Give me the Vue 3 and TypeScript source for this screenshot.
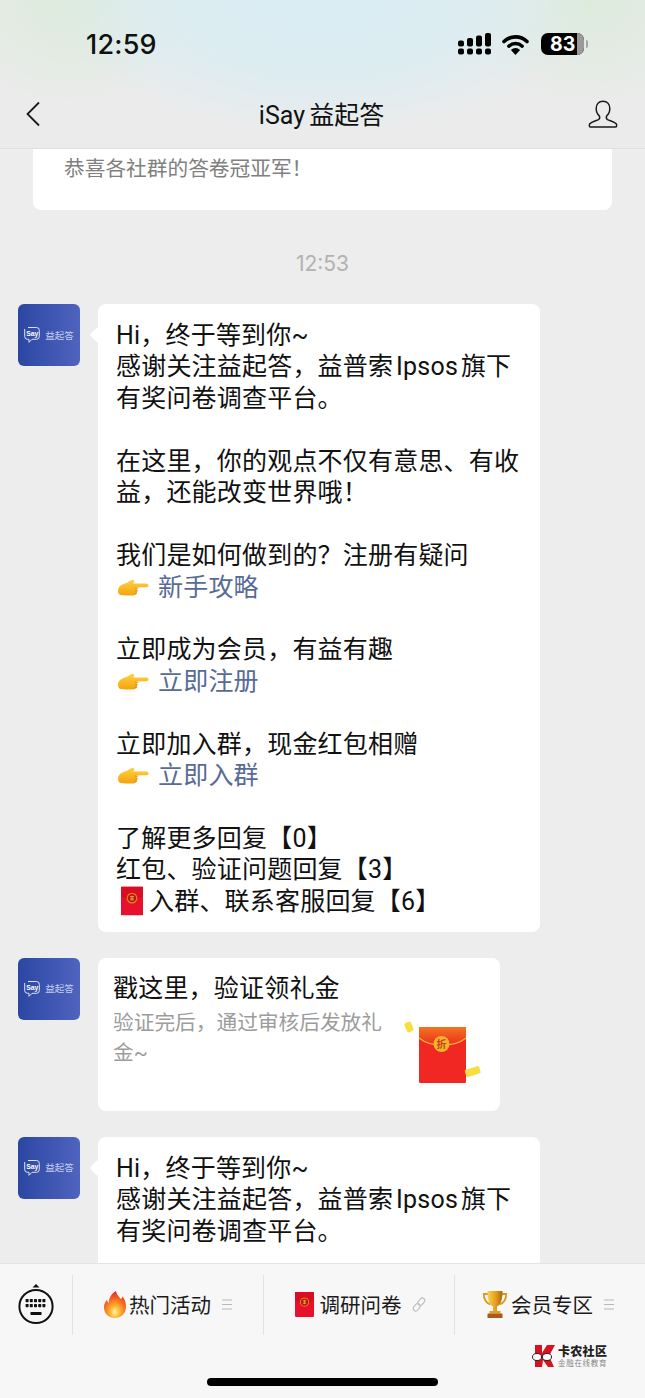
<template>
  <div class="phone">
    <svg class="sprite" width="0" height="0" aria-hidden="true">
      <defs>
        <linearGradient id="hand-fill" x1="0" y1="0" x2="0" y2="1">
          <stop offset="0" stop-color="#ffd13f" />
          <stop offset="1" stop-color="#f5a30f" />
        </linearGradient>
        <radialGradient id="flame-fill" cx="0.5" cy="0.78" r="0.75">
          <stop offset="0" stop-color="#fff3b0" />
          <stop offset="0.3" stop-color="#ffb52e" />
          <stop offset="0.7" stop-color="#f4611f" />
          <stop offset="1" stop-color="#d8322a" />
        </radialGradient>
        <linearGradient id="cup-fill" x1="0" y1="0" x2="1" y2="0">
          <stop offset="0" stop-color="#f9d251" />
          <stop offset="0.55" stop-color="#e3a01e" />
          <stop offset="1" stop-color="#a9660f" />
        </linearGradient>
        <linearGradient id="env-top" x1="0" y1="0" x2="0" y2="1">
          <stop offset="0" stop-color="#f2751f" />
          <stop offset="1" stop-color="#ee2c22" />
        </linearGradient>
        <filter id="soft">
          <feGaussianBlur stdDeviation="0.6" />
        </filter>
        <symbol id="hand" viewBox="0 0 32 20">
          <path
            d="M1 12c0-3 1.500-5 4-6.300 2.600-1.400 5-1.700 7-3.200 1.600-1.200 3.600-2 4.800-1.200 1 .7.600 2-.8 3.200 4.500-.2 9.500-.1 13.300.1 1.600.1 2.200 1 2.200 1.900 0 1-.8 1.700-2.200 1.700l-10 .2c.8.500 1 1.400.6 2.100.6.600.6 1.500 0 2.100.4.700.2 1.500-.5 2-.3 1.200-1.300 1.700-2.900 1.800-3.300.2-7.400.3-10-.2C3 16.800 1 15 1 12z"
            fill="url(#hand-fill)"
          />
          <path d="M18 9.200h3.300M18 11.900h2.900M17.300 14.500h2.600" stroke="#d98a10" stroke-width=".8" fill="none" />
        </symbol>
        <symbol id="packet" viewBox="0 0 23 30">
          <rect width="23" height="30" rx="1" fill="#e8112d" />
          <path d="M0 0h23v9.500c-3 2.500-7 3.700-11.500 3.700S3 12 0 9.500z" fill="#d90d25" />
          <circle cx="11.500" cy="12" r="5.600" fill="#e58a12" />
          <circle cx="11.500" cy="12" r="4.400" fill="#b9131d" />
          <path d="M9.500 10.300h4M9.500 12h4M9.500 13.700h4M11.500 9.400v5.200" stroke="#f5b32a" stroke-width=".8" />
        </symbol>
        <symbol id="isay" viewBox="0 0 16 17">
          <path d="M4 1.500h8.500a2.800 2.800 0 0 1 2.800 2.800v6.200a2.800 2.800 0 0 1-2.800 2.800H8l-3 3v-3H3.500a2.800 2.800 0 0 1-2.800-2.800V3" fill="none" stroke="#dfe5f8" stroke-width="1" />
          <text x="8.200" y="10" text-anchor="middle" font-family="Liberation Sans" font-size="6.800" font-weight="700" fill="#fff">Say</text>
        </symbol>
      </defs>
    </svg>

    <header class="top">
      <div class="status">
        <span class="clock">12:59</span>
        <div class="status-icons">
          <svg class="signal" width="33" height="22" viewBox="0 0 33 22">
            <g fill="#000">
              <rect x="0" y="7.500" width="6" height="6" rx="2" />
              <rect x="0" y="15.500" width="6" height="6" rx="2" />
              <rect x="9" y="5" width="6" height="8.500" rx="2" />
              <rect x="9" y="15.500" width="6" height="6" rx="2" />
              <rect x="18" y="2.500" width="6" height="11" rx="2" />
              <rect x="18" y="15.500" width="6" height="6" rx="2" />
              <rect x="27" y="0" width="6" height="13.500" rx="2" />
              <rect x="27" y="15.500" width="6" height="6" rx="2" />
            </g>
          </svg>
          <svg class="wifi" width="27" height="21" viewBox="0 0 27 21">
            <path d="M2 7.500a16.500 16.500 0 0 1 23 0" fill="none" stroke="#000" stroke-width="3.600" stroke-linecap="round" />
            <path d="M6.800 12.200a9.800 9.800 0 0 1 13.400 0" fill="none" stroke="#000" stroke-width="3.400" stroke-linecap="round" />
            <path d="M13.500 21l-4.600-5a6.400 6.400 0 0 1 9.200 0z" fill="#000" />
          </svg>
          <div class="battery">
            <div class="battery-body">
              <span class="battery-rest"></span>
              <span class="battery-level">83</span>
            </div>
            <span class="battery-cap"></span>
          </div>
        </div>
      </div>
      <nav class="nav">
        <svg width="16" height="26" viewBox="0 0 16 26">
          <path d="M14 1.500L2.500 13 14 24.500" fill="none" stroke="#1a1a1a" stroke-width="1.800" />
        </svg>
        <h1 class="title">iSay 益起答</h1>
        <svg class="nav-user" width="30" height="28" viewBox="0 0 30 28">
          <path
            d="M15 1.200c-4.200 0-6.800 3.100-6.800 7.400 0 3.300 1.400 6 3.300 7.500.4 1.700.2 2.800-1 3.500-2.200 1.200-6.900 2.100-8.700 4.200-.8 1-.6 3.200.8 3.200h24.800c1.400 0 1.600-2.200.8-3.200-1.800-2.100-6.500-3-8.700-4.200-1.200-.7-1.400-1.800-1-3.500 1.900-1.500 3.300-4.200 3.300-7.500 0-4.300-2.600-7.400-6.800-7.400z"
            fill="none"
            stroke="#1a1a1a"
            stroke-width="1.500"
          />
        </svg>
      </nav>
    </header>

    <main class="chat">
      <section class="notice">恭喜各社群的答卷冠亚军！</section>
      <time class="stamp">12:53</time>

      <div class="msg">
        <div class="avatar">
          <svg width="16" height="17"><use href="#isay" /></svg>
          <span>益起答</span>
        </div>
        <div class="bubble">
          <template v-for="(line, i) in lines" :key="i">
            <p v-if="line.link" class="line">
              <svg class="hand-icon" width="32" height="20"><use href="#hand" /></svg>
              <a class="link">{{ line.text }}</a>
            </p>
            <p v-else-if="line.packet" class="line">
              <svg class="packet-icon" width="22" height="30"><use href="#packet" /></svg>{{ line.text }}
            </p>
            <p v-else class="line">{{ line.text || '\u00a0' }}</p>
          </template>
        </div>
      </div>

      <div class="msg">
        <div class="avatar">
          <svg width="16" height="17"><use href="#isay" /></svg>
          <span>益起答</span>
        </div>
        <article class="card">
          <h2 class="card-title">戳这里，验证领礼金</h2>
          <div class="card-body">
            <p class="card-desc">验证完后，通过审核后发放礼金~</p>
            <svg class="card-art" width="82" height="68" viewBox="0 0 82 68">
              <rect x="17" y="6" width="47" height="56" rx="1.500" fill="#f02722" />
              <path d="M17 6h47v11c-6 5-15 7-23.500 7S23 22 17 17z" fill="url(#env-top)" />
              <path d="M17 17c6 5 15 7 23.500 7S58 22 64 17" fill="none" stroke="#f7b52d" stroke-width="1.200" />
              <circle cx="39.500" cy="23" r="8" fill="#f5b32a" />
              <text x="39.500" y="27" text-anchor="middle" class="art-char">折</text>
              <g fill="#f7dd3c" filter="url(#soft)">
                <rect x="3.500" y="1" width="7" height="10" rx="2" transform="rotate(-22 7 6)" />
                <rect x="63" y="47" width="15" height="7.500" rx="1.500" transform="rotate(-18 70 50)" />
              </g>
            </svg>
          </div>
        </article>
      </div>

      <div class="msg">
        <div class="avatar">
          <svg width="16" height="17"><use href="#isay" /></svg>
          <span>益起答</span>
        </div>
        <div class="bubble bubble-cut">
          <p v-for="(line, i) in lines.slice(0, 3)" :key="i" class="line">{{ line.text }}</p>
        </div>
      </div>
    </main>

    <footer class="bottom">
      <div class="menu">
        <div class="keyboard">
          <svg width="36" height="41" viewBox="0 0 36 41">
            <path d="M18 0l3.500 3.500h-7z" fill="#111" />
            <circle cx="18" cy="22.500" r="16.600" fill="none" stroke="#111" stroke-width="2" />
            <g fill="#111">
              <rect v-for="k in keys" :key="k.id" :x="k.x" :y="k.y" width="3" height="3.200" rx=".6" />
              <rect x="12.500" y="28" width="11" height="3" rx=".6" />
            </g>
          </svg>
        </div>
        <button class="tab">
          <svg width="22" height="27" viewBox="0 0 22 27">
            <path
              d="M11.800 0c1 3.500 3 5.500 5 8 1.200-.6 1.500-1.800 1.600-2.800C20.600 8 22 11 22 15.500 22 22 17.500 27 11 27S0 22.500 0 16.200c0-3 1.300-5.400 3-7.500.2 1.400.7 2.500 1.800 3.200C4.700 7 7.700 2.500 11.800 0z"
              fill="url(#flame-fill)"
            />
          </svg>
          <span>热门活动</span>
          <svg class="tab-mark" width="10" height="11" viewBox="0 0 10 11">
            <path d="M0 1h10M0 5.500h10M0 10h10" stroke="#b8b8b8" stroke-width="1.100" />
          </svg>
        </button>
        <button class="tab tab-survey">
          <svg width="19" height="27"><use href="#packet" /></svg>
          <span>调研问卷</span>
          <svg class="tab-mark" width="14" height="15" viewBox="0 0 14 15">
            <g fill="none" stroke="#bdbdbd" stroke-width="1.100">
              <rect x="6.800" y="0.700" width="5" height="8" rx="2.500" transform="rotate(38 9.300 4.700)" />
              <rect x="2.200" y="6.300" width="5" height="8" rx="2.500" transform="rotate(38 4.700 10.300)" />
            </g>
          </svg>
        </button>
        <button class="tab tab-member">
          <svg width="26" height="27" viewBox="0 0 26 27">
            <path d="M6 3H1.800c0 5.500 2.200 9 6.700 10.500M20 3h4.200c0 5.500-2.200 9-6.700 10.500" fill="none" stroke="#d9991d" stroke-width="1.800" />
            <path d="M5.500 0h15c0 8-1.500 14-5.500 15.500v4.500h-4v-4.500C7 14 5.500 8 5.500 0z" fill="url(#cup-fill)" />
            <rect x="7.500" y="20" width="11" height="2.500" fill="#e0a022" />
            <rect x="5.500" y="22.500" width="15" height="4.500" rx=".5" fill="#a85a16" />
          </svg>
          <span>会员专区</span>
          <svg class="tab-mark" width="10" height="11" viewBox="0 0 10 11">
            <path d="M0 1h10M0 5.500h10M0 10h10" stroke="#b8b8b8" stroke-width="1.100" />
          </svg>
        </button>
      </div>

      <div class="brand">
        <svg width="24" height="24" viewBox="0 0 24 24">
          <path d="M3 1h7v8l5-8h8l-6 11 5 11h-6l-5-7-1 7H3z" fill="#d8131f" />
          <ellipse cx="5" cy="13" rx="4.500" ry="3.500" fill="#fff" stroke="#222" stroke-width="1" />
          <ellipse cx="15" cy="13" rx="4.500" ry="3.500" fill="#fff" stroke="#222" stroke-width="1" />
        </svg>
        <div class="brand-text">
          <strong>卡农社区</strong>
          <small>金融在线教育</small>
        </div>
      </div>
      <div class="home-bar"></div>
    </footer>
  </div>
</template>

<script setup lang="ts">
interface Line {
  text: string
  link?: boolean
  packet?: boolean
}

const lines: Line[] = [
  { text: 'Hi，终于等到你~' },
  { text: '感谢关注益起答，益普索 Ipsos 旗下' },
  { text: '有奖问卷调查平台。' },
  { text: '' },
  { text: '在这里，你的观点不仅有意思、有收' },
  { text: '益，还能改变世界哦！' },
  { text: '' },
  { text: '我们是如何做到的？注册有疑问' },
  { text: '新手攻略', link: true },
  { text: '' },
  { text: '立即成为会员，有益有趣' },
  { text: '立即注册', link: true },
  { text: '' },
  { text: '立即加入群，现金红包相赠' },
  { text: '立即入群', link: true },
  { text: '' },
  { text: '了解更多回复【0】' },
  { text: '红包、验证问题回复【3】' },
  { text: '入群、联系客服回复【6】', packet: true }
]

// keyboard glyph dots, 2 rows of 5
const keys = [0, 1].flatMap((row) =>
  [0, 1, 2, 3, 4].map((col) => ({
    id: `${row}-${col}`,
    x: 7.600 + col * 4.2,
    y: 15 + row * 5
  }))
)
</script>

<style scoped>
.phone {
  width: 645px;
  height: 1398px;
  display: flex;
  flex-direction: column;
  overflow: hidden;
  position: relative;
  background: #ededed;
  font-family: Roboto, 'Noto Sans CJK SC', sans-serif;
  color: #111;
}

.sprite {
  position: absolute;
}

.top {
  height: 149px;
  flex: none;
  box-sizing: border-box;
  display: flex;
  flex-direction: column;
  border-bottom: 1px solid #e0e0e0;
  background:
    radial-gradient(ellipse 270px 135px at 322px 0, #d9edf3 0%, rgba(217, 237, 243, 0.8) 55%, rgba(217, 237, 243, 0) 100%),
    radial-gradient(ellipse 130px 110px at 70px 0, #dcebdc 0%, rgba(220, 235, 220, 0) 100%),
    radial-gradient(ellipse 130px 110px at 590px 0, #dcebdc 0%, rgba(220, 235, 220, 0) 100%),
    #ebebeb;
}

.status {
  height: 84px;
  box-sizing: border-box;
  padding: 4px 61px 0 86px;
  display: flex;
  align-items: center;
  justify-content: space-between;
}

.clock {
  font-family: Inter, sans-serif;
  font-size: 27px;
  font-weight: 500;
  letter-spacing: 0.2px;
}

.status-icons {
  display: flex;
  align-items: center;
}

.signal {
  margin-right: 11px;
}

.wifi {
  margin-right: 12px;
}

.battery {
  position: relative;
  width: 43px;
  height: 22px;
}

.battery-body {
  position: relative;
  display: flex;
  align-items: center;
  height: 100%;
  box-sizing: border-box;
  padding-left: 9px;
  border-radius: 7px;
  overflow: hidden;
  background: #000;
  color: #fff;
  font-family: Inter, sans-serif;
  font-size: 19.500px;
  font-weight: 700;
  line-height: 20px;
}

.battery-level {
  position: relative;
}

.battery-rest {
  position: absolute;
  top: 0;
  right: 0;
  width: 7px;
  height: 100%;
  background: #9a9a9a;
}

.battery-cap {
  position: absolute;
  left: 45px;
  top: 7px;
  width: 2px;
  height: 8px;
  border-radius: 0 2px 2px 0;
  background: #a5a5a5;
}

.nav {
  height: 60px;
  padding: 0 27px 0 25px;
  display: grid;
  grid-template-columns: 1fr auto 1fr;
  align-items: center;
}

.nav-user {
  justify-self: end;
}

.title {
  margin: 0 0 3px;
  font-size: 25px;
  font-weight: 400;
  word-spacing: -2px;
}

.chat {
  flex: 1;
  min-height: 0;
  overflow: hidden;
  display: flex;
  flex-direction: column;
}

.notice {
  flex: none;
  box-sizing: border-box;
  margin: 0 33px;
  height: 61px;
  padding: 5px 31px 0;
  background: #fff;
  border-radius: 0 0 8px 8px;
  font-size: 20.700px;
  line-height: 31px;
  color: #808080;
}

.stamp {
  flex: none;
  margin-top: 39px;
  margin-bottom: 25px;
  height: 30px;
  line-height: 30px;
  font-family: Inter, sans-serif;
  font-size: 21px;
  text-align: center;
  color: #b2b2b2;
}

.msg {
  flex: none;
  display: flex;
  align-items: flex-start;
  padding-left: 18px;
  margin-bottom: 26px;
}

.avatar {
  flex: none;
  width: 62px;
  height: 62px;
  box-sizing: border-box;
  padding-bottom: 1px;
  border-radius: 6px;
  background: linear-gradient(90deg, #2b47a2, #4f64bf);
  display: flex;
  align-items: center;
  justify-content: center;
  gap: 5px;
  color: #c5cef0;
  font-size: 9.500px;
}

.bubble {
  position: relative;
  margin-left: 18px;
  width: 442px;
  box-sizing: border-box;
  padding: 16px 18px 14.500px;
  background: #fff;
  border-radius: 8px;
  font-size: 25px;
  line-height: 31.450px;
  color: #111;
}

.bubble-cut {
  padding-bottom: 40px;
}

.bubble::before {
  content: '';
  position: absolute;
  left: -6px;
  top: 25px;
  width: 12px;
  height: 12px;
  background: #fff;
  transform: rotate(45deg);
  border-radius: 2px;
}

.line {
  position: relative;
  margin: 0;
  height: 31.450px;
  white-space: nowrap;
  letter-spacing: 0.2px;
  word-spacing: -3.500px;
}

.hand-icon {
  vertical-align: -3px;
  margin-left: 1px;
  margin-right: 9px;
}

.packet-icon {
  vertical-align: -6px;
  margin-left: 5px;
  margin-right: 6px;
}

.link {
  color: #576b95;
}

.card {
  margin-left: 18px;
  width: 402px;
  height: 153px;
  box-sizing: border-box;
  padding: 15px 16px 0 15px;
  background: #fff;
  border-radius: 8px;
}

.card-title {
  margin: 0;
  font-size: 25px;
  font-weight: 400;
  line-height: 31px;
  letter-spacing: 0.2px;
}

.card-body {
  display: flex;
  justify-content: space-between;
  margin-top: 4px;
}

.card-desc {
  margin: 0;
  width: 272px;
  font-size: 20.700px;
  line-height: 30px;
  color: #9c9c9c;
}

.card-art {
  flex: none;
  margin-top: 13px;
}

.art-char {
  font-size: 10px;
  font-weight: 700;
  fill: #c8411c;
}

.bottom {
  position: relative;
  flex: none;
  height: 135px;
  box-sizing: border-box;
  border-top: 1px solid #e4e4e4;
  background: #f7f7f7;
}

.menu {
  display: grid;
  grid-template-columns: 72px repeat(3, 191px);
  height: 60px;
  margin-top: 11px;
}

.keyboard {
  display: flex;
  align-items: center;
  justify-content: center;
  padding-bottom: 2px;
}

.tab {
  border: 0;
  border-left: 1px solid #e3e3e3;
  background: none;
  padding: 0 0 2px;
  display: flex;
  align-items: center;
  justify-content: center;
  gap: 3px;
  font: inherit;
  font-size: 20.500px;
  color: #1a1a1a;
}

.tab-survey {
  gap: 6px;
  padding-left: 2px;
}

.tab-member {
  padding-right: 4px;
}

.tab-mark {
  margin-left: 8px;
}

.tab-survey .tab-mark {
  margin-left: 4px;
}

.brand {
  position: absolute;
  left: 532px;
  top: 80px;
  display: flex;
  align-items: center;
  gap: 2px;
}

.brand-text {
  display: flex;
  flex-direction: column;
  color: #222;
}

.brand-text strong {
  font-size: 12px;
  line-height: 15px;
  font-weight: 900;
  letter-spacing: 0.3px;
}

.brand-text small {
  font-size: 7.500px;
  line-height: 8px;
  letter-spacing: 0.7px;
  color: #888;
}

.home-bar {
  position: absolute;
  left: 207px;
  bottom: 12px;
  width: 231px;
  height: 8px;
  border-radius: 4px;
  background: #000;
}
</style>
